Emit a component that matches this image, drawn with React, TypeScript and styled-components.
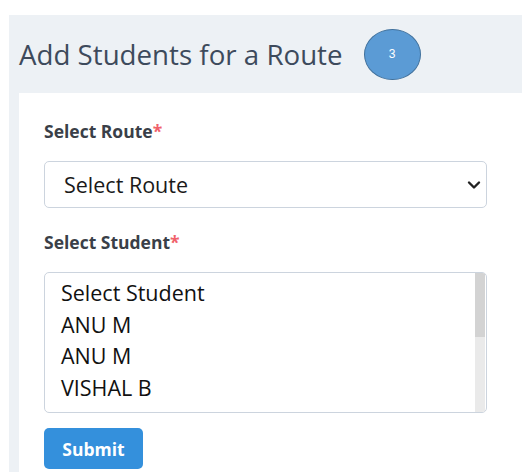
import React from "react";
import styled, { createGlobalStyle } from "styled-components";

const GlobalStyle = createGlobalStyle`
  html, body {
    margin: 0;
    padding: 0;
    background: #ffffff;
    font-family: "Open Sans", "Lato", sans-serif;
  }
`;

const students = ["Select Student", "ANU M", "ANU M", "VISHAL B"];

const App: React.FC = () => {
  return (
    <Page>
      <GlobalStyle />
      <Panel>
        <Header>
          <Title>Add Students for a Route</Title>
          <Badge>3</Badge>
        </Header>
        <Card>
          <Label>
            Select Route<Req>*</Req>
          </Label>
          <SelectBox>
            <span>Select Route</span>
            <svg width="14" height="10" viewBox="0 0 14 10">
              <path d="M2 2.5 L7 7.5 L12 2.5" fill="none" stroke="#222" strokeWidth="2.4" strokeLinecap="round" strokeLinejoin="round" />
            </svg>
          </SelectBox>
          <Label>
            Select Student<Req>*</Req>
          </Label>
          <ListBox>
            <Items>
              {students.map((s, i) => (
                <Item key={i}>{s}</Item>
              ))}
            </Items>
            <Track>
              <Thumb />
            </Track>
          </ListBox>
          <SubmitButton>Submit</SubmitButton>
        </Card>
      </Panel>
    </Page>
  );
};

export default App;

const Page = styled.div`
  width: 522px;
  height: 472px;
  overflow: hidden;
  padding: 15px 0 0 9px;
  box-sizing: border-box;
`;

const Panel = styled.section`
  background: #edf1f5;
  height: 100%;
  padding: 0 0 0 10px;
  display: flex;
  flex-direction: column;
`;

const Header = styled.div`
  display: flex;
  align-items: center;
  height: 78px;
  gap: 21px;
`;

const Title = styled.h1`
  margin: 0;
  font-size: 27.7px;
  font-weight: 400;
  color: #3d4a5c;
`;

const Badge = styled.div`
  width: 57px;
  height: 51px;
  border-radius: 50%;
  background: #5b9bd5;
  border: 1.5px solid #41719c;
  color: #ffffff;
  font-family: "Liberation Sans", sans-serif;
  font-size: 12px;
  display: flex;
  align-items: center;
  justify-content: center;
  box-sizing: border-box;
`;

const Card = styled.div`
  flex: 1;
  background: #ffffff;
  padding: 26px 0 0 25px;
  display: flex;
  flex-direction: column;
  align-items: flex-start;
`;

const Label = styled.label`
  font-size: 17.5px;
  font-weight: 700;
  color: #3a3f48;
  margin-bottom: 18px;
  line-height: 24px;
`;

const Req = styled.span`
  color: #f0616b;
`;

const SelectBox = styled.div`
  width: 443px;
  height: 47px;
  box-sizing: border-box;
  border: 1px solid #ccd4de;
  border-radius: 5px;
  display: flex;
  align-items: center;
  justify-content: space-between;
  padding: 0 5px 0 19px;
  font-size: 21.5px;
  color: #1a1a1a;
  margin-bottom: 22px;
`;

const ListBox = styled.div`
  width: 443px;
  height: 141px;
  box-sizing: border-box;
  border: 1px solid #ccd4de;
  border-radius: 5px;
  display: flex;
  overflow: hidden;
  margin-bottom: 15px;
`;

const Items = styled.div`
  flex: 1;
  padding: 4px 0 0 16px;
`;

const Item = styled.div`
  font-size: 21.5px;
  line-height: 31.5px;
  color: #111111;
`;

const Track = styled.div`
  width: 10px;
  margin-right: 1px;
  background: #eaeaea;
  display: flex;
  flex-direction: column;
`;

const Thumb = styled.div`
  height: 64px;
  background: #d3d3d3;
`;

const SubmitButton = styled.button`
  width: 99px;
  height: 41px;
  border: none;
  border-radius: 5px;
  background: #3490dc;
  color: #ffffff;
  font-family: "Open Sans", "Lato", sans-serif;
  font-size: 17.5px;
  font-weight: 700;
  padding: 0;
`;
